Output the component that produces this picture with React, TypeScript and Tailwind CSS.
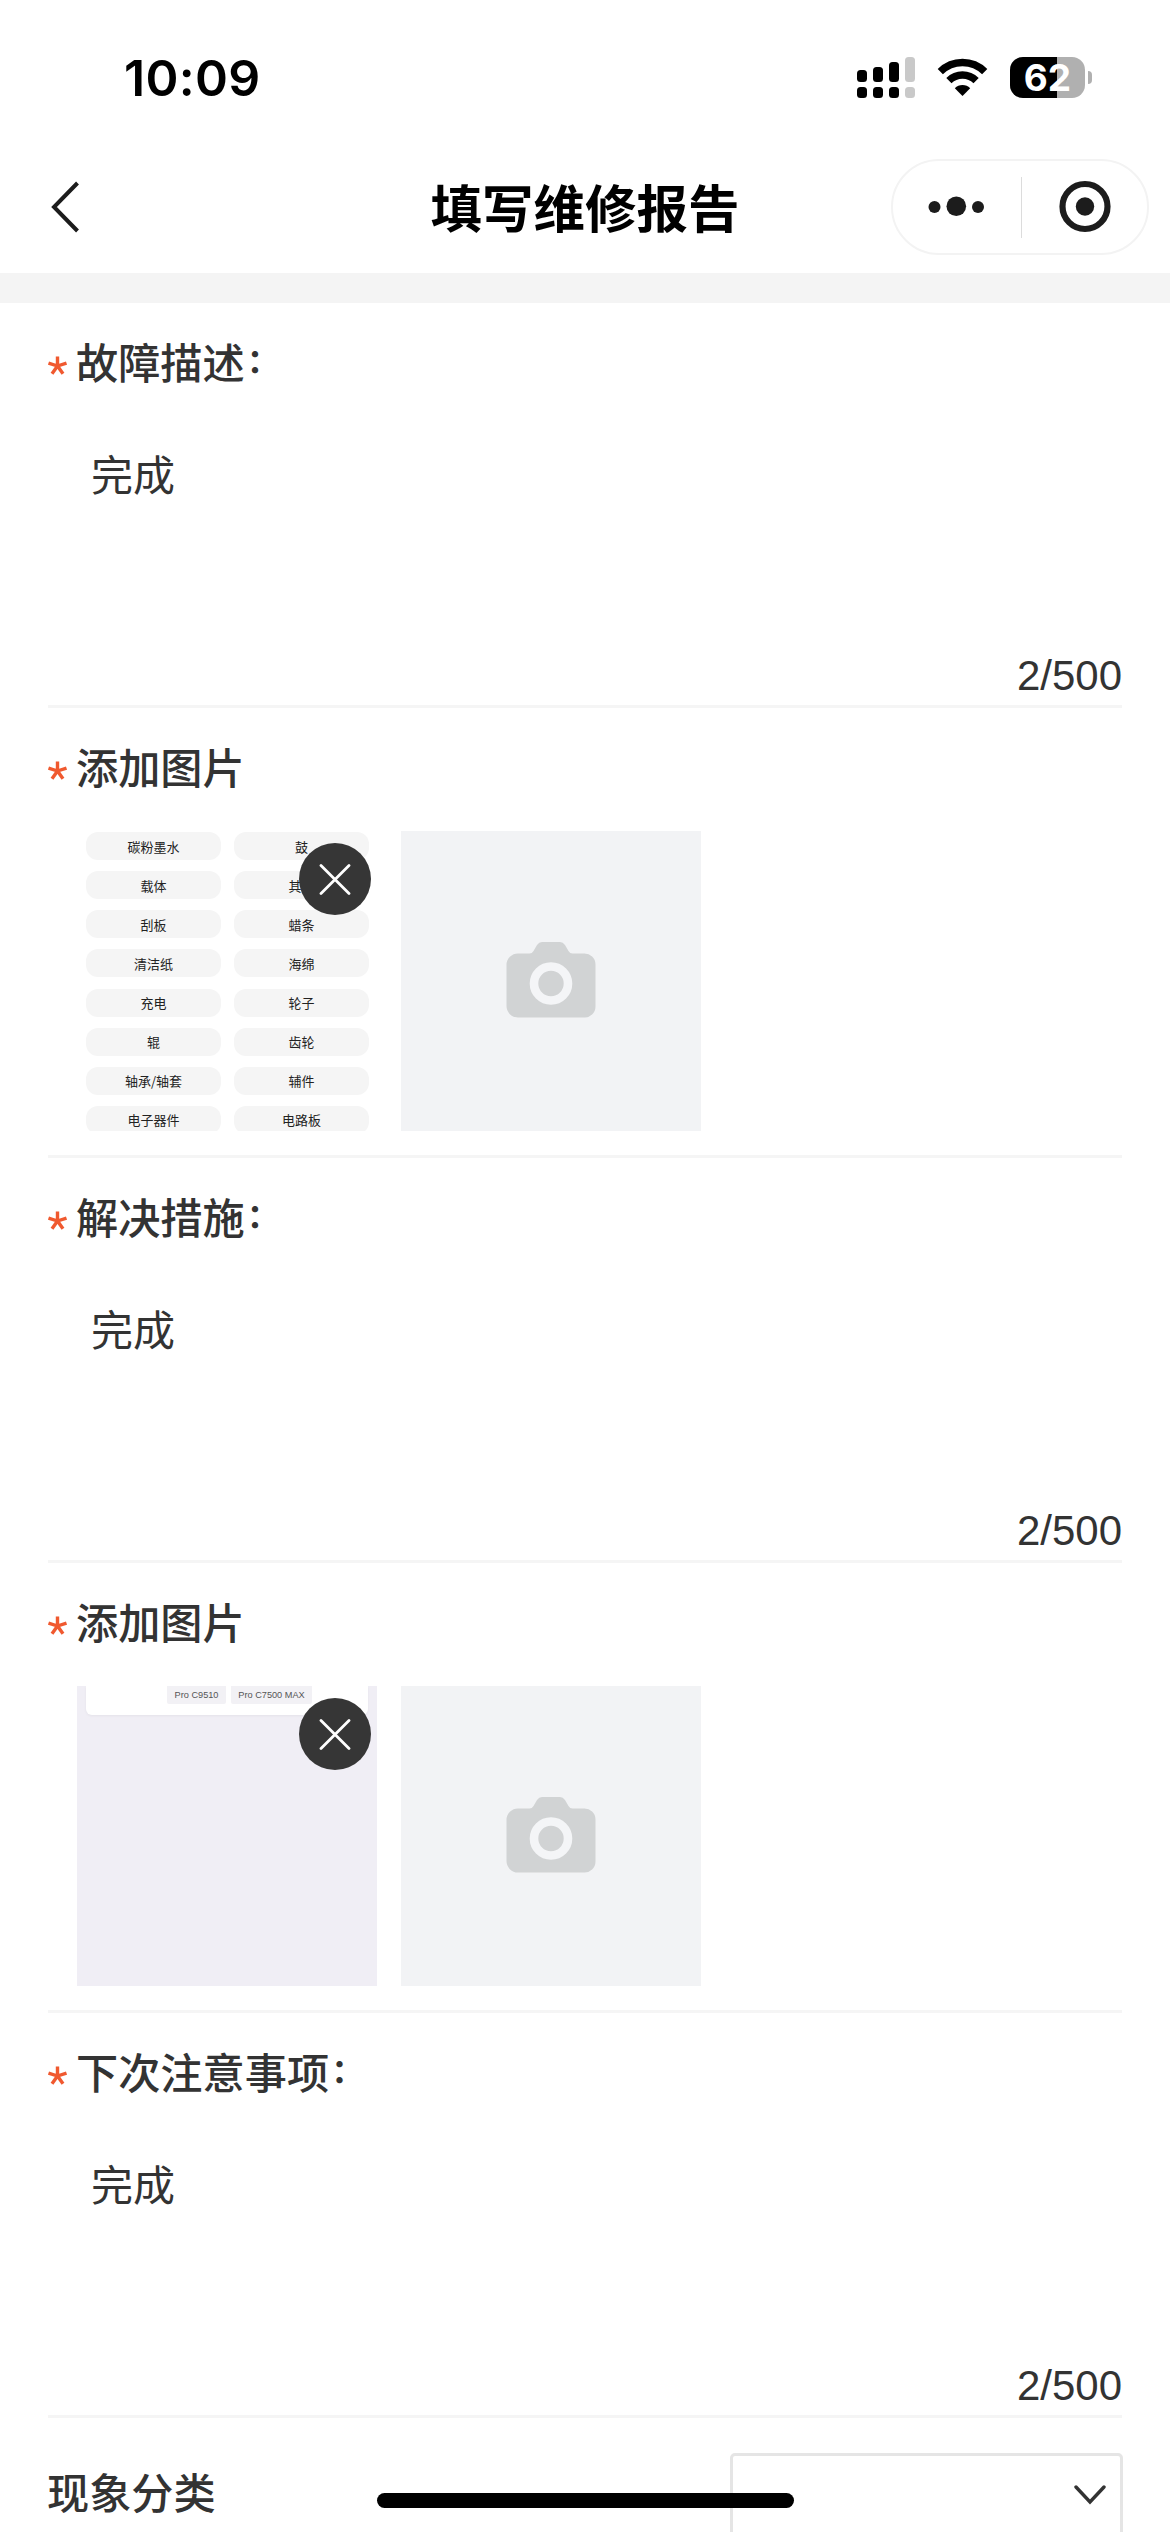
import React, { useState } from 'react';

interface PhotoProps {
    children: React.ReactNode;
    onRemove: () => void;
}

const PART_TAGS = [
    '碳粉墨水', '鼓',
    '载体', '其他',
    '刮板', '蜡条',
    '清洁纸', '海绵',
    '充电', '轮子',
    '辊', '齿轮',
    '轴承/轴套', '辅件',
    '电子器件', '电路板',
];

const StatusBar: React.FC = () => (
    <div className="flex h-[140px] items-start justify-between pl-[124px] pr-[78px] pt-[57px]">
        <span className="font-[Inter] text-[50px] font-semibold leading-[42px] tracking-[0.3px] text-black">10:09</span>
        <div className="flex items-start">
            <svg width="58" height="41" viewBox="0 0 58 41" className="mr-[22px]">
                <rect x="0" y="13" width="10" height="12" rx="3.5" />
                <rect x="16" y="10" width="10" height="15" rx="3.5" />
                <rect x="32" y="5" width="10" height="20" rx="3.5" />
                <rect x="48" y="0" width="10" height="25" rx="3.5" fill="#c9c9c9" />
                <rect x="0" y="30" width="10" height="11" rx="3.5" />
                <rect x="16" y="30" width="10" height="11" rx="3.5" />
                <rect x="32" y="30" width="10" height="11" rx="3.5" />
                <rect x="48" y="30" width="10" height="11" rx="3.5" fill="#c9c9c9" />
            </svg>
            <svg width="51" height="41" viewBox="0 0 51 41" className="mr-[22px]">
                <path d="M3.3 14.6a31.5 31.5 0 0 1 44.4 0" fill="none" stroke="#000" strokeWidth="7.4" />
                <path d="M11.9 23.6a19.3 19.3 0 0 1 27.2 0" fill="none" stroke="#000" strokeWidth="7.4" />
                <path d="M25.5 39l-7.7-7.8a11 11 0 0 1 15.4 0z" />
            </svg>
            <div className="relative flex h-[41px] w-[75px] items-center justify-center rounded-[13px] bg-[#b0b0b0]">
                <div className="absolute inset-y-0 left-0 w-[47px] rounded-l-[13px] bg-black" />
                <span className="relative font-[Inter] text-[37px] font-bold leading-[41px] text-white">62</span>
            </div>
            <div className="ml-[3px] mt-[14px] h-[13px] w-[4px] rounded-r-full bg-[#b0b0b0]" />
        </div>
    </div>
);

const NavBar: React.FC = () => (
    <div className="relative flex h-[133px] items-center justify-center">
        <svg width="30" height="54" viewBox="0 0 30 54" className="absolute left-[50px] top-[40px]">
            <path d="M27.5 3L4 27l23.5 24" fill="none" stroke="#1c1c1c" strokeWidth="4" />
        </svg>
        <h1 className="mb-[2px] text-[51.5px] font-bold leading-[60px] text-black">填写维修报告</h1>
        <div className="absolute right-[21px] top-[19px] flex h-[96px] w-[258px] items-center rounded-full border-2 border-[#f3f3f3]">
            <svg width="128" height="60" viewBox="0 0 128 60" fill="#1c1c1c">
                <circle cx="41.5" cy="30" r="6" />
                <circle cx="63.3" cy="29.3" r="9.8" />
                <circle cx="85" cy="30" r="6" />
            </svg>
            <div className="h-[61px] w-px bg-[#dcdcdc]" />
            <svg width="125" height="60" viewBox="0 0 125 60" fill="#1c1c1c">
                <circle cx="63" cy="29.5" r="22.5" fill="none" stroke="#1c1c1c" strokeWidth="6.2" />
                <circle cx="63" cy="29.5" r="9.2" />
            </svg>
        </div>
    </div>
);

const FieldLabel: React.FC<{ text: string; colon?: boolean }> = ({ text, colon }) => (
    <div className="flex h-[58px] items-center text-[42.2px] font-medium leading-[58px] text-[#333]">
        <svg width="19" height="19" viewBox="0 0 19 19" className="mr-[9px] mt-[8px]">
            <path d="M9.5 10V0.5M9.5 10L0.5 7M9.5 10L18.5 7M9.5 10L4 17.7M9.5 10L15 17.7" stroke="#f0592f" strokeWidth="3.4" />
        </svg>
        <span>{text}</span>
        {colon && <span className="relative left-[2px] -top-[2px] text-[33px] font-bold">：</span>}
    </div>
);

const TextField: React.FC<{ label: string }> = ({ label }) => {
    const [value, setValue] = useState('完成');

    return (
        <section className="mx-[48px] flex h-[405px] flex-col border-b-[3px] border-[#f5f5f5] pt-[29px]">
            <FieldLabel text={label} colon />
            <textarea
                value={value}
                onChange={e => setValue(e.target.value)}
                maxLength={500}
                className="ml-[43px] mt-[53px] h-[208px] resize-none text-[42px] leading-[60px] text-[#333] outline-none"
            />
            <p className="text-right font-['Liberation_Sans'] text-[42px] leading-[50px] text-[#333]">{value.length}/500</p>
        </section>
    );
};

const Photo: React.FC<PhotoProps> = ({ children, onRemove }) => (
    <div className="relative h-[300px] w-[300px] overflow-hidden">
        {children}
        <button onClick={onRemove} className="absolute right-[6px] top-[12px] flex h-[72px] w-[72px] items-center justify-center rounded-full bg-[#363636]">
            <svg width="32" height="32" viewBox="0 0 32 32">
                <path d="M2 2.5l28 28M30 2.5l-28 28" stroke="#fff" strokeWidth="2.8" strokeLinecap="round" />
            </svg>
        </button>
    </div>
);

const AddPhoto: React.FC = () => (
    <button className="flex h-[300px] w-[300px] items-center justify-center bg-[#f2f3f5]">
        <svg width="90" height="76" viewBox="0 0 90 76" className="mb-[2px]">
            <path
                d="M12 11.5H23.5Q26 11.5 27.5 9L31 3Q33 0 36 0H54Q57 0 59 3L62.5 9Q64 11.5 66.5 11.5H78A11 11 0 0 1 89.5 22.5V64.5A11 11 0 0 1 78 75.5H12A11.5 11.5 0 0 1 .5 64V23A11.5 11.5 0 0 1 12 11.5Z"
                fill="#d1d3d4"
            />
            <circle cx="45" cy="41.5" r="17" fill="none" stroke="#f4f5f7" strokeWidth="8.6" />
        </svg>
    </button>
);

const PartsPhoto: React.FC = () => (
    <div className="grid grid-cols-[135px_135px] gap-x-[13px] gap-y-[11.15px] bg-white pl-[9px] pt-px">
        {PART_TAGS.map(tag => (
            <span key={tag} className="flex h-[28px] items-center justify-center rounded-[12px] bg-[#f5f5f5] text-[13px] leading-none text-[#222]">
                {tag}
            </span>
        ))}
    </div>
);

const ModelsPhoto: React.FC = () => (
    <div className="h-full bg-[#f0eef5] px-[9px] font-['Liberation_Sans'] text-[9.2px] text-[#555]">
        <div className="flex h-[29px] items-start gap-[5px] rounded-b-[6px] bg-white pl-[81px] shadow-[0_1px_3px_rgba(0,0,0,0.05)]">
            <span className="flex h-[18px] w-[59px] items-center justify-center rounded-b-[2px] bg-[#f2f1f5] pt-px">Pro C9510</span>
            <span className="flex h-[18px] w-[81px] items-center justify-center rounded-b-[2px] bg-[#f2f1f5] pt-px">Pro C7500 MAX</span>
        </div>
    </div>
);

const PhotoField: React.FC<{ children: React.ReactNode }> = ({ children }) => {
    const [hasPhoto, setHasPhoto] = useState(true);

    return (
        <section className="mx-[48px] h-[450px] border-b-[3px] border-[#f5f5f5] pt-[29px]">
            <FieldLabel text="添加图片" />
            <div className="ml-[29px] mt-[36px] flex gap-[24px]">
                {hasPhoto && <Photo onRemove={() => setHasPhoto(false)}>{children}</Photo>}
                <AddPhoto />
            </div>
        </section>
    );
};

const CategoryField: React.FC = () => (
    <div className="mx-[47px] flex items-start justify-between pt-[35px]">
        <span className="mt-[8px] text-[42.2px] font-medium leading-[60px] text-[#333]">现象分类</span>
        <div className="flex h-[84px] w-[393px] items-center justify-end rounded-[5px] border-[3px] border-[#e5e5e5] pr-[14px]">
            <svg width="32" height="20" viewBox="0 0 32 20">
                <path d="M2 2l14 15L30 2" fill="none" stroke="#333" strokeWidth="3.4" strokeLinecap="round" />
            </svg>
        </div>
    </div>
);

export default function App() {
    return (
        <div className="relative h-[2532px] w-[1170px] overflow-hidden bg-white font-['Noto_Sans_CJK_SC',sans-serif]">
            <StatusBar />
            <NavBar />
            <div className="h-[30px] bg-[#f4f4f4]" />
            <TextField label="故障描述" />
            <PhotoField><PartsPhoto /></PhotoField>
            <TextField label="解决措施" />
            <PhotoField><ModelsPhoto /></PhotoField>
            <TextField label="下次注意事项" />
            <CategoryField />
            <div className="absolute bottom-[24px] left-[377px] h-[15px] w-[417px] rounded-full bg-black" />
        </div>
    );
}
